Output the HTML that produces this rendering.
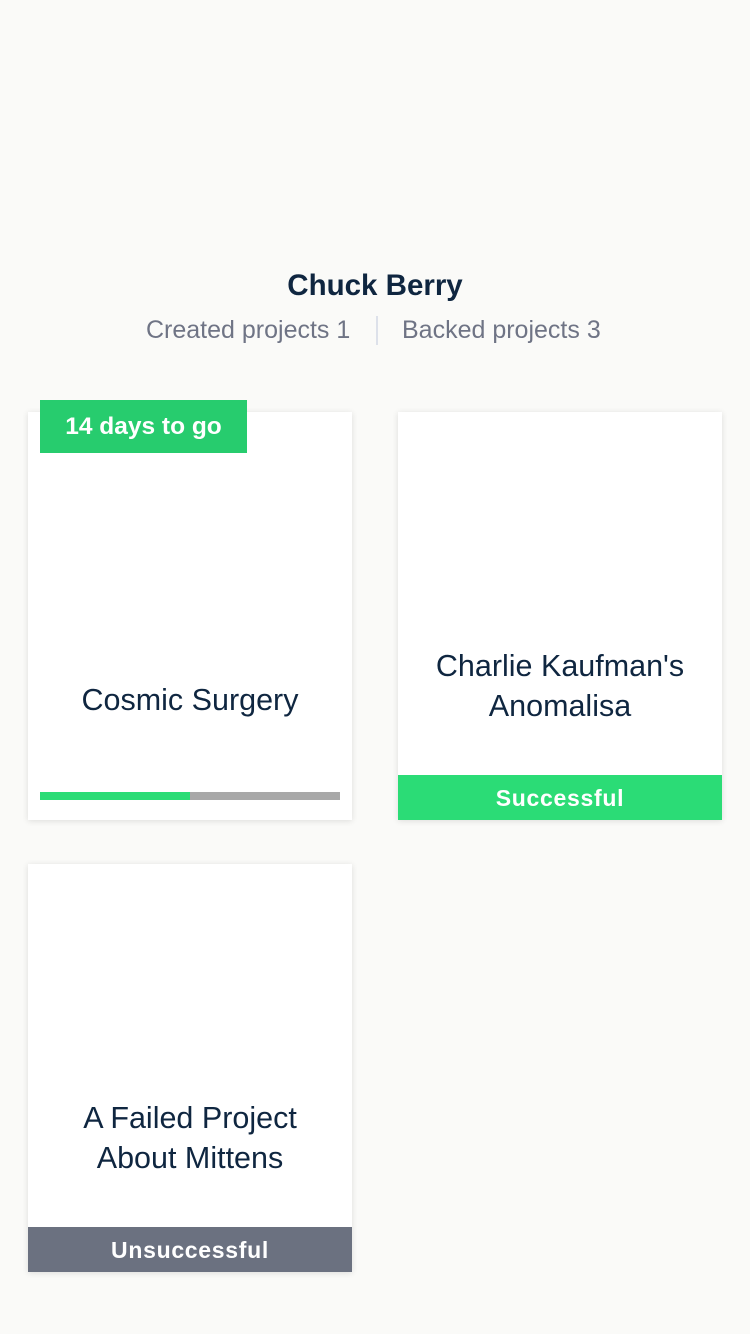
<!DOCTYPE html>
<html><head><style>
body{margin:0;width:750px;height:1334px;background:#fafaf8;font-family:"Liberation Sans",sans-serif;position:relative;overflow:hidden}
.abs{position:absolute}
.card{position:absolute;width:324px;height:408px;background:#fff;box-shadow:0 1px 6px rgba(0,0,0,0.12)}
.t{position:absolute;left:0;width:100%;text-align:center;font-size:30.5px;color:#0f2640;line-height:40px}
.band{position:absolute;left:0;bottom:0;width:100%;height:45px;color:#fff;font-size:23px;font-weight:bold;text-align:center;line-height:46px;letter-spacing:0.7px}
</style></head><body>
<div class="abs" style="top:269px;width:750px;text-align:center;font-size:29.5px;font-weight:bold;color:#0f2640">Chuck Berry</div>
<div class="abs" style="top:316px;left:0;width:750px;font-size:25px;color:#6f7485">
<span class="abs" style="left:146px">Created projects 1</span>
<span class="abs" style="left:376px;top:0;width:2px;height:29px;background:#dde1ea"></span>
<span class="abs" style="left:402px">Backed projects 3</span></div>
<div class="card" style="left:28px;top:412px">
<div class="t" style="top:268px">Cosmic Surgery</div>
<div class="abs" style="left:12px;top:380px;width:150px;height:8px;background:#2bdc76"></div>
<div class="abs" style="left:162px;top:380px;width:150px;height:8px;background:#a8a8a8"></div>
</div>
<div class="abs" style="left:40px;top:400px;width:207px;height:53px;background:#27cc6e;color:#fff;font-size:24.5px;font-weight:bold;line-height:53px;text-align:center">14 days to go</div>
<div class="card" style="left:398px;top:412px">
<div class="t" style="top:234px">Charlie Kaufman's<br>Anomalisa</div>
<div class="band" style="background:#2bdc76">Successful</div>
</div>
<div class="card" style="left:28px;top:864px">
<div class="t" style="top:234px">A Failed Project<br>About Mittens</div>
<div class="band" style="background:#6b7180">Unsuccessful</div>
</div>
</body></html>
